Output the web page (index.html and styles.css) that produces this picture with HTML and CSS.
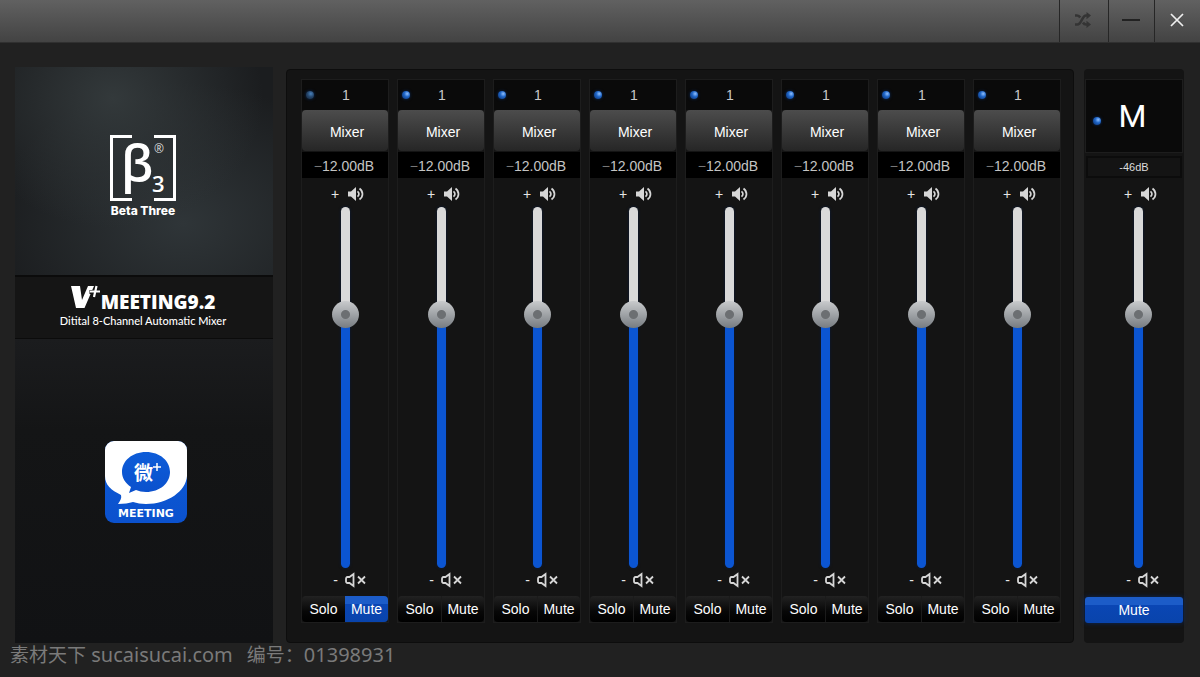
FILE: index.html
```html
<!DOCTYPE html>
<html lang="en">
<head>
<meta charset="utf-8">
<meta name="viewport" content="width=device-width, initial-scale=1">
<title>V+ Meeting 9.2</title>
<link rel="stylesheet" href="styles.css">
</head>
<body>
<svg class="defs" aria-hidden="true">
  <symbol id="loud" viewBox="0 0 16 14">
    <path d="M0 4.500h3L8 0v14L3 9.500H0z" fill="#d6d6d6"/>
    <path d="M9.500 4.300c1.900 1.500 1.900 3.900 0 5.400M11.500 1.500c4 3 4 8 0 11" fill="none" stroke="#d6d6d6" stroke-width="1.700"/>
  </symbol>
  <symbol id="muted" viewBox="0 0 22 16">
    <path d="M8.500 2v12L4.500 11H2.500Q1 11 1 9V7Q1 5 2.500 5h2z" fill="none" stroke="#d6d6d6" stroke-width="1.800"/>
    <path d="M13 4.500l7 7M20 4.500l-7 7" stroke="#d6d6d6" stroke-width="1.800"/>
  </symbol>
</svg>

<header class="titlebar">
  <button class="win-btn" aria-label="Shuffle">
    <svg width="18" height="16" viewBox="0 0 18 16" fill="none" stroke="#343434" stroke-width="2.600"><path d="M1 12.500h2.500c4 0 4.500-9 8.500-9h1.500M1 3.500h2c1.500 0 2.500 .8 3.200 2M9 10.500c.8 1.300 1.700 2 3 2h1.500"/><path d="M12.500 0L17 3.500 12.500 7.200zM12.500 8.800l4.500 3.700-4.500 3.500z" fill="#343434" stroke="none"/></svg>
  </button>
  <button class="win-btn" aria-label="Minimize">
    <svg width="20" height="4" viewBox="0 0 20 4"><path d="M1 2h18" stroke="#222" stroke-width="2"/></svg>
  </button>
  <button class="win-btn" aria-label="Close">
    <svg width="14" height="14" viewBox="0 0 14 14"><path d="M1 1l12 12M13 1L1 13" stroke="#eee" stroke-width="1.700"/></svg>
  </button>
</header>

<main class="layout">
  <aside class="sidebar">
    <div class="brand">
      <svg class="logo" width="70" height="86" viewBox="0 0 70 86" role="img" aria-label="Beta Three">
        <path d="M24 2.500H3.500v63H24M46 2.500h20.500v63H46" fill="none" stroke="#fff" stroke-width="3"/>
        <text class="logo-beta" x="13" y="48">β</text>
        <text class="logo-three" x="44" y="58">3</text>
        <text class="logo-reg" x="46" y="19">®</text>
        <text class="logo-name" x="35" y="81">Beta Three</text>
      </svg>
    </div>
    <div class="product">
      <div class="product-name">
        <svg width="30" height="24" viewBox="0 0 30 24" role="img" aria-label="V+">
          <path d="M0 1h9l2 14L17 1h6L13.500 23H5z" fill="#fff"/>
          <path d="M26 0l-3 13M18.500 7H29" stroke="#151515" stroke-width="4"/>
          <path d="M25.500 1l-2.500 11M19 6.500h10" stroke="#fff" stroke-width="2.200"/>
        </svg>
        <strong>MEETING9.2</strong>
      </div>
      <div class="product-sub">Ditital 8-Channel Automatic Mixer</div>
    </div>
    <div class="app">
      <svg class="logo" width="84" height="84" viewBox="0 0 84 84" role="img" aria-label="Meeting">
        <defs><linearGradient id="blue" x2="0" y2="1"><stop offset="0" stop-color="#0d5cd8"/><stop offset="1" stop-color="#0b51cd"/></linearGradient></defs>
        <rect x="1" y="1" width="82" height="82" rx="9" fill="url(#blue)"/>
        <path d="M1 10a9 9 0 0 1 9-9h64a9 9 0 0 1 9 9v26C82 51 64 64 42 64c-5 0-9-1-13-2-4 1-9 2-15 2 2-3 4-6 3-9C7 50 1 45 1 36z" fill="#fff"/>
        <path d="M42 12c14 0 24 9 24 20S56 52 42 52c-4 0-7-1-10-2l-7 3 2-6c-6-4-9-9-9-15 0-11 10-20 24-20z" fill="url(#blue)"/>
        <text class="app-wei" x="30" y="40">微</text>
        <path d="M53 23v8M49 27h8" stroke="#fff" stroke-width="1.500"/>
        <text class="app-name" x="42" y="77">MEETING</text>
      </svg>
    </div>
  </aside>

  <section class="mixer">
    <section class="channel">
      <div class="head"><i class="led dim"></i><span>1</span></div>
      <button class="source">Mixer</button>
      <output class="gain"><span class="minus">−</span>12.00dB</output>
      <div class="mark"><span>+</span><svg class="loud"><use href="#loud"/></svg></div>
      <input class="fader" type="range" value="72" aria-label="Channel 1 level">
      <div class="mark low"><span>-</span><svg class="muted"><use href="#muted"/></svg></div>
      <div class="pair"><button class="key">Solo</button><button class="key on">Mute</button></div>
    </section>
    <section class="channel">
      <div class="head"><i class="led"></i><span>1</span></div>
      <button class="source">Mixer</button>
      <output class="gain"><span class="minus">−</span>12.00dB</output>
      <div class="mark"><span>+</span><svg class="loud"><use href="#loud"/></svg></div>
      <input class="fader" type="range" value="72" aria-label="Channel 2 level">
      <div class="mark low"><span>-</span><svg class="muted"><use href="#muted"/></svg></div>
      <div class="pair"><button class="key">Solo</button><button class="key">Mute</button></div>
    </section>
    <section class="channel">
      <div class="head"><i class="led"></i><span>1</span></div>
      <button class="source">Mixer</button>
      <output class="gain"><span class="minus">−</span>12.00dB</output>
      <div class="mark"><span>+</span><svg class="loud"><use href="#loud"/></svg></div>
      <input class="fader" type="range" value="72" aria-label="Channel 3 level">
      <div class="mark low"><span>-</span><svg class="muted"><use href="#muted"/></svg></div>
      <div class="pair"><button class="key">Solo</button><button class="key">Mute</button></div>
    </section>
    <section class="channel">
      <div class="head"><i class="led"></i><span>1</span></div>
      <button class="source">Mixer</button>
      <output class="gain"><span class="minus">−</span>12.00dB</output>
      <div class="mark"><span>+</span><svg class="loud"><use href="#loud"/></svg></div>
      <input class="fader" type="range" value="72" aria-label="Channel 4 level">
      <div class="mark low"><span>-</span><svg class="muted"><use href="#muted"/></svg></div>
      <div class="pair"><button class="key">Solo</button><button class="key">Mute</button></div>
    </section>
    <section class="channel">
      <div class="head"><i class="led"></i><span>1</span></div>
      <button class="source">Mixer</button>
      <output class="gain"><span class="minus">−</span>12.00dB</output>
      <div class="mark"><span>+</span><svg class="loud"><use href="#loud"/></svg></div>
      <input class="fader" type="range" value="72" aria-label="Channel 5 level">
      <div class="mark low"><span>-</span><svg class="muted"><use href="#muted"/></svg></div>
      <div class="pair"><button class="key">Solo</button><button class="key">Mute</button></div>
    </section>
    <section class="channel">
      <div class="head"><i class="led"></i><span>1</span></div>
      <button class="source">Mixer</button>
      <output class="gain"><span class="minus">−</span>12.00dB</output>
      <div class="mark"><span>+</span><svg class="loud"><use href="#loud"/></svg></div>
      <input class="fader" type="range" value="72" aria-label="Channel 6 level">
      <div class="mark low"><span>-</span><svg class="muted"><use href="#muted"/></svg></div>
      <div class="pair"><button class="key">Solo</button><button class="key">Mute</button></div>
    </section>
    <section class="channel">
      <div class="head"><i class="led"></i><span>1</span></div>
      <button class="source">Mixer</button>
      <output class="gain"><span class="minus">−</span>12.00dB</output>
      <div class="mark"><span>+</span><svg class="loud"><use href="#loud"/></svg></div>
      <input class="fader" type="range" value="72" aria-label="Channel 7 level">
      <div class="mark low"><span>-</span><svg class="muted"><use href="#muted"/></svg></div>
      <div class="pair"><button class="key">Solo</button><button class="key">Mute</button></div>
    </section>
    <section class="channel">
      <div class="head"><i class="led"></i><span>1</span></div>
      <button class="source">Mixer</button>
      <output class="gain"><span class="minus">−</span>12.00dB</output>
      <div class="mark"><span>+</span><svg class="loud"><use href="#loud"/></svg></div>
      <input class="fader" type="range" value="72" aria-label="Channel 8 level">
      <div class="mark low"><span>-</span><svg class="muted"><use href="#muted"/></svg></div>
      <div class="pair"><button class="key">Solo</button><button class="key">Mute</button></div>
    </section>
  </section>

  <section class="master">
    <div class="master-head"><i class="led"></i><span>M</span></div>
    <output class="master-gain">-46dB</output>
    <div class="master-strip">
      <div class="mark"><span>+</span><svg class="loud"><use href="#loud"/></svg></div>
      <input class="fader" type="range" value="72" aria-label="Master level">
      <div class="mark low"><span>-</span><svg class="muted"><use href="#muted"/></svg></div>
    </div>
    <button class="key on wide">Mute</button>
  </section>
</main>

<footer class="credit">
  <div><span class="han">素材天下</span> sucaisucai.com</div>
  <div><span class="han">编号：</span>01398931</div>
</footer>
</body>
</html>
```
FILE: styles.css
```css
* { box-sizing: border-box; }

body {
  margin: 0;
  min-height: 100vh;
  background: #212121;
  color: #fff;
  font-family: "Liberation Sans", Arial, sans-serif;
  font-size: 14px;
}

button { border: 0; margin: 0; padding: 0; color: inherit; font: inherit; }

.defs { display: none; }

.titlebar {
  display: flex;
  justify-content: flex-end;
  height: 43px;
  background: linear-gradient(#616161, #434343);
  border-bottom: 1px solid #303030;
}

.win-btn {
  display: flex;
  align-items: center;
  justify-content: center;
  width: 46px;
  padding: 0 2px 2px 0;
  background: none;
  border-left: 1px solid #262626;
}
.win-btn:first-child { width: 49px; }

.layout {
  display: flex;
  align-items: stretch;
  padding: 24px 16px 0 15px;
}

.sidebar {
  display: flex;
  flex-direction: column;
  width: 258px;
  margin-right: 13px;
}

.logo { overflow: visible; }

.brand {
  display: flex;
  align-items: center;
  justify-content: center;
  height: 208px;
  padding: 12px 2px 0 0;
  background:
    radial-gradient(ellipse 150px 130px at 38% 15%, #33393b 0%, transparent 100%),
    radial-gradient(ellipse 190px 140px at 65% 75%, #2f3538 0%, transparent 100%),
    #1b1d1f;
}
.logo-beta { font: 600 50px "Open Sans", sans-serif; fill: #fff; }
.logo-three { font: 600 22px "Open Sans", sans-serif; fill: #fff; }
.logo-reg { font: 12px "Open Sans", sans-serif; fill: #ddd; }
.logo-name { font: 800 12px Inter, sans-serif; fill: #fff; text-anchor: middle; }

.product {
  height: 64px;
  padding: 8px 2px 0 0;
  background: #151515;
  border-top: 2px solid #0b0b0b;
  border-bottom: 1px solid #0b0b0b;
  text-align: center;
}
.product-name { display: flex; justify-content: center; height: 29px; }
.product-name strong { font: 800 19px/34px "Open Sans", sans-serif; }
.product-sub { font: 500 11px/14px Lato, sans-serif; white-space: nowrap; }

.app {
  display: flex;
  flex: 1;
  justify-content: center;
  padding: 101px 0 0 4px;
  background: linear-gradient(#1b1c1e, #141516 30%, #111214);
}
.app-wei { font: bold 19px "Noto Sans CJK SC", sans-serif; fill: #fff; }
.app-name { font: bold 11px "DejaVu Sans", sans-serif; fill: #fff; text-anchor: middle; }

.mixer {
  display: grid;
  grid-template-columns: repeat(8, minmax(0, 1fr));
  gap: 8px;
  flex: 1;
  margin: 2px 10px 0 0;
  padding: 9px 12px 19px 14px;
  background: #141414;
  border: 1px solid #0d0d0d;
  border-radius: 4px;
}

.channel, .master { display: flex; flex-direction: column; align-items: stretch; }
.channel { border: 1px solid #1d1d1d; }

.head {
  display: grid;
  grid-template-columns: 15px 1fr 13px;
  align-items: center;
  height: 30px;
  background: #0a0a0a;
  color: #c8c8c8;
  text-align: center;
}

.led {
  width: 8px;
  height: 8px;
  margin-left: 4px;
  border-radius: 50%;
  background: radial-gradient(circle at 65% 35%, #8fc0ff 0, #1f66c8 40%, #0a2e6c 100%);
  box-shadow: 0 0 3px #0a2c60;
}
.led.dim { background: radial-gradient(circle at 60% 35%, #4a82bd 0, #25466c 45%, #14253a 100%); }

.source {
  height: 41px;
  padding: 3px 0 0 4px;
  border-radius: 4px;
  background: linear-gradient(#4c4c4c, #262626);
}

.gain {
  display: block;
  height: 26px;
  margin-top: 1px;
  padding-right: 2px;
  background: #000;
  color: #c4c4c4;
  line-height: 28px;
  text-align: center;
  white-space: nowrap;
}
.minus { color: #777; }

.mark {
  display: flex;
  align-items: center;
  justify-content: center;
  gap: 9px;
  height: 29px;
  padding: 2px 0 0 5px;
  color: #e6e6e6;
}
.mark.low { height: 28px; gap: 7px; padding: 0 0 4px 10px; }
.loud { width: 16px; height: 14px; }
.muted { width: 22px; height: 16px; }

.fader {
  display: block;
  appearance: none;
  writing-mode: vertical-lr;
  direction: rtl;
  width: 27px;
  height: 361px;
  margin: 0 auto;
  background: none;
}
.fader::-webkit-slider-runnable-track {
  width: 9px;
  height: 361px;
  border-radius: 5px;
  background: linear-gradient(#d9d9d9 30%, #0b55d2 30%);
  box-shadow: 0 0 3px #0a1c3c;
}
.fader::-webkit-slider-thumb {
  appearance: none;
  width: 27px;
  height: 27px;
  margin-left: -9px;
  border-radius: 50%;
  background:
    radial-gradient(circle, #6c6f72 0 4px, transparent 5px),
    linear-gradient(#c8cacc, #777c81);
}

.pair {
  display: grid;
  grid-template-columns: 1fr 1fr;
  height: 26px;
  border-radius: 4px;
  overflow: hidden;
}
.key { background: linear-gradient(#222, #070707 60%, #000); }
.key + .key { border-left: 1px solid #1b1b1b; }
.key.on {
  border: 0;
  background: linear-gradient(#1c5cc8 0 30%, #0a46b4 31%, #0944ac);
}

.master {
  width: 100px;
  margin-top: 2px;
  padding: 10px 1px 19px;
  background: #141414;
  border-radius: 4px;
}
.master-head {
  display: grid;
  grid-template-columns: 13px 1fr 16px;
  align-items: center;
  height: 74px;
  border: 1px solid #1d1d1d;
  background: #0a0a0a;
  font: 32px Roboto, sans-serif;
  text-align: center;
}
.master-head .led { margin: 9px 0 0 7px; }
.master-gain {
  display: block;
  height: 22px;
  margin: 3px 1px 0;
  border: 2px solid #0c0c0c;
  color: #ddd;
  font-size: 11px;
  line-height: 19px;
  text-align: center;
}
.master-strip { padding-left: 8px; }
.wide { height: 26px; margin-top: 1px; border-radius: 3px; box-shadow: 0 0 5px #0a2860; }

.credit {
  display: flex;
  gap: 14px;
  padding-left: 10px;
  color: #7a7a7a;
  font: 20px/21px "Noto Sans", sans-serif;
}
.han { font: 19px/21px "Noto Sans CJK SC", sans-serif; }
```
